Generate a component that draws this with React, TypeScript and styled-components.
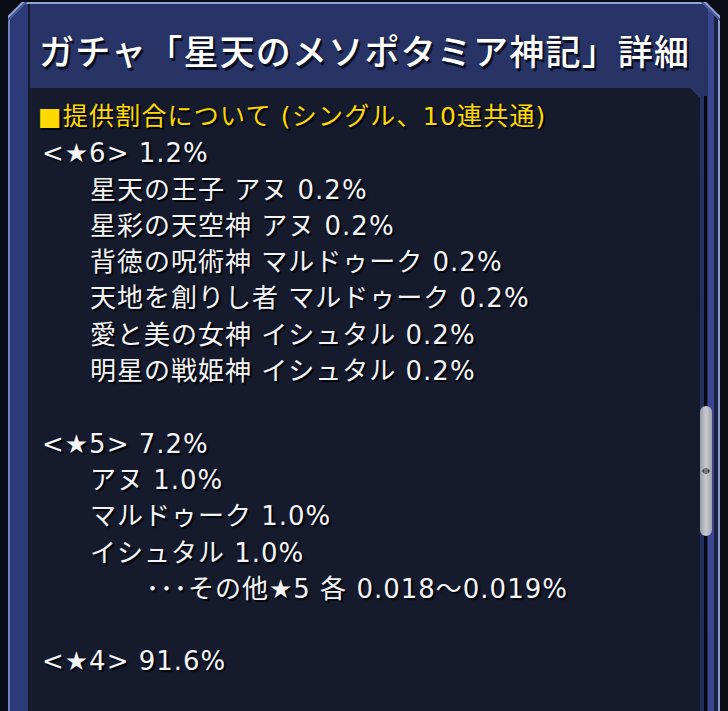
import styled, { createGlobalStyle } from "styled-components";

const GlobalStyle = createGlobalStyle`
  html, body {
    margin: 0;
    padding: 0;
    background: #0b0d16;
    overflow: hidden;
  }
  #root {
    width: 728px;
    height: 711px;
  }
`;

interface Line {
  text: string;
  level: number;
}

const lines: Line[] = [
  { text: "<★6> 1.2%", level: 0 },
  { text: "星天の王子 アヌ 0.2%", level: 1 },
  { text: "星彩の天空神 アヌ 0.2%", level: 1 },
  { text: "背徳の呪術神 マルドゥーク 0.2%", level: 1 },
  { text: "天地を創りし者 マルドゥーク 0.2%", level: 1 },
  { text: "愛と美の女神 イシュタル 0.2%", level: 1 },
  { text: "明星の戦姫神 イシュタル 0.2%", level: 1 },
  { text: "", level: 0 },
  { text: "<★5> 7.2%", level: 0 },
  { text: "アヌ 1.0%", level: 1 },
  { text: "マルドゥーク 1.0%", level: 1 },
  { text: "イシュタル 1.0%", level: 1 },
  { text: "･･･その他★5 各 0.018〜0.019%", level: 2 },
  { text: "", level: 0 },
  { text: "<★4> 91.6%", level: 0 },
];

const indents = [0, 48, 104];

const Screen = styled.div`
  width: 728px;
  height: 711px;
  padding: 2px 8px 0 8px;
  box-sizing: border-box;
  overflow: hidden;
`;

const Frame = styled.div`
  height: 740px;
  background:
    linear-gradient(135deg, transparent 9.6px, #8fa2d6 9.6px, #8fa2d6 11.6px, #4a5a98 11.6px, #4a5a98 14px, transparent 14px) top left / 24px 24px no-repeat,
    linear-gradient(225deg, transparent 9.6px, #8fa2d6 9.6px, #8fa2d6 11.6px, #4a5a98 11.6px, #4a5a98 14px, transparent 14px) top right / 24px 24px no-repeat,
    linear-gradient(180deg, #8fa2d6 0, #8fa2d6 2px, transparent 2px),
    linear-gradient(90deg, #6f82bf 0, #6f82bf 2px, #2d3a78 2px, #2d3a78 20px, #141829 20px, #141829 22px, transparent 22px),
    linear-gradient(270deg, #8a9bd0 0, #8a9bd0 2px, #1a2040 2px, #1a2040 6px, #3a4790 6px, #3a4790 12px, transparent 12px),
    linear-gradient(180deg, #283467 0%, #222c58 100%);
  clip-path: polygon(14px 0, calc(100% - 14px) 0, 100% 14px, 100% 100%, 0 100%, 0 14px);
  display: flex;
  flex-direction: column;
`;

const Title = styled.h1`
  margin: 0;
  padding: 25px 0 0 31px;
  height: 61px;
  font-family: "Noto Sans CJK JP", "Noto Sans", sans-serif;
  font-weight: 500;
  font-size: 35px;
  line-height: 46px;
  color: #ffffff;
  letter-spacing: 1.2px;
  text-spacing-trim: space-all;
  white-space: nowrap;
  text-shadow: 2px 3px 0 #0c1024, 1px 1px 2px #0c1024;
`;

const Body = styled.div`
  display: flex;
  margin-left: 22px;
  flex: 1;
`;

const Panel = styled.div`
  width: 670px;
  background: #151a2c;
  clip-path: polygon(0 0, calc(100% - 10px) 0, 100% 10px, 100% 100%, 0 100%);
  padding: 11px 0 0 12px;
  box-sizing: border-box;
  font-family: "DejaVu Sans", "Noto Sans CJK JP", sans-serif;
  font-size: 26px;
  color: #f4f4f4;
  letter-spacing: 1px;
  text-spacing-trim: space-all;
  text-shadow: 2px 2px 1px #04060c;
`;

const Header = styled.div`
  color: #ffd800;
  margin-left: -4px;
  font-size: 25px;
  letter-spacing: 1.2px;
  height: 36.3px;
  line-height: 36.3px;
  white-space: nowrap;
`;

const Row = styled.div<{ $indent: number }>`
  padding-left: ${(p) => p.$indent}px;
  height: 36.3px;
  line-height: 36.3px;
  white-space: nowrap;
`;

const Track = styled.div`
  width: 12px;
  padding-top: 318px;
  position: relative;
  &::before {
    content: "";
    position: absolute;
    left: 4px;
    top: 8px;
    bottom: 0;
    width: 3px;
    background: #07080e;
  }
`;

const Thumb = styled.div`
  position: relative;
  width: 12px;
  height: 130px;
  border-radius: 6px;
  background: linear-gradient(90deg, #9a9ca4, #c9cbd1 50%, #a0a2aa);
  display: flex;
  align-items: center;
  justify-content: center;
`;

const Grip = styled.svg`
  width: 8px;
  height: 10px;
`;

export default function App() {
  return (
    <>
      <GlobalStyle />
      <Screen>
        <Frame>
          <Title>ガチャ「星天のメソポタミア神記」詳細</Title>
          <Body>
            <Panel>
              <Header>■提供割合について (シングル、10連共通)</Header>
              {lines.map((line, i) => (
                <Row key={i} $indent={indents[line.level]}>
                  {line.text}
                </Row>
              ))}
            </Panel>
            <Track>
              <Thumb>
                <Grip viewBox="0 0 8 10">
                  <path d="M0 5 L2.5 2 L2.5 8 Z M8 5 L5.5 2 L5.5 8 Z" fill="#3a3c44" />
                  <rect x="3.3" y="2" width="0.6" height="6" fill="#3a3c44" />
                  <rect x="4.3" y="2" width="0.6" height="6" fill="#3a3c44" />
                </Grip>
              </Thumb>
            </Track>
          </Body>
        </Frame>
      </Screen>
    </>
  );
}
